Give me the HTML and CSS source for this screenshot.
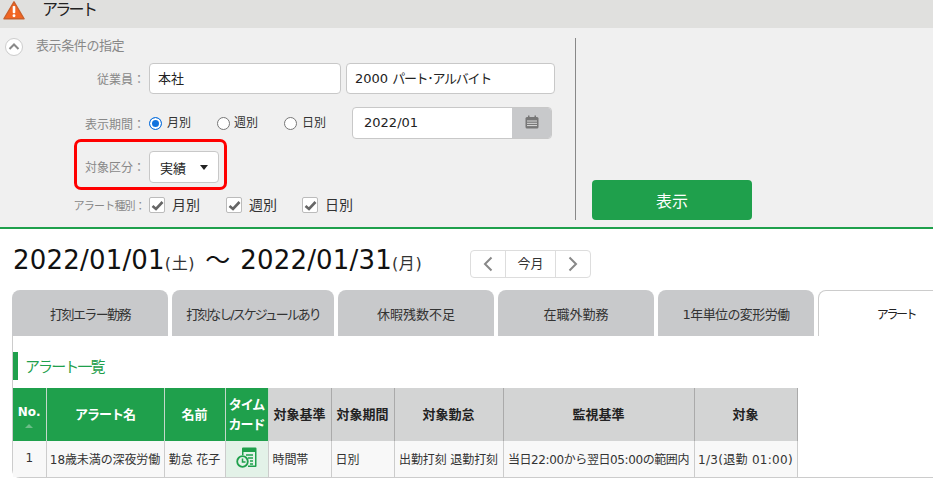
FILE: index.html
```html
<!DOCTYPE html>
<html lang="ja">
<head>
<meta charset="utf-8">
<title>アラート</title>
<link rel="stylesheet" href="styles.css">
</head>
<body>
<header class="topbar">
  <svg class="warn" width="22" height="21" viewBox="0 0 24 22"><path d="M12 1.5 L23 20 H1 Z" fill="#f26522" stroke="#c9602c" stroke-width="1.5" stroke-linejoin="round"/><rect x="10.6" y="6" width="2.8" height="8" rx="1" fill="#fff"/><circle cx="12" cy="16.8" r="1.6" fill="#fff"/></svg>
  <h1 class="page-title">アラート</h1>
</header>
<section class="filter">
  <div class="filter-left">
    <div class="filter-title">
      <svg width="18" height="18" viewBox="0 0 18 18"><circle cx="9" cy="9" r="8.500" fill="#fff" stroke="#ccc"/><path d="M4.500 11 L9 6.500 L13.500 11" fill="none" stroke="#888" stroke-width="2"/></svg>
      <span>表示条件の指定</span>
    </div>
    <div class="row row-emp">
      <label class="lbl">従業員：</label>
      <div class="field f-office">本社</div>
      <div class="field f-type">2000 <span class="narrow">パート･アルバイト</span></div>
    </div>
    <div class="row row-period">
      <label class="lbl">表示期間：</label>
      <span class="radio radio-on"></span><span class="opt opt-r1">月別</span>
      <span class="radio"></span><span class="opt opt-r2">週別</span>
      <span class="radio"></span><span class="opt opt-r3">日別</span>
      <div class="date">
        <span class="date-val">2022/01</span>
        <span class="date-btn"><svg width="14" height="14" viewBox="0 0 14 14"><rect x="0.5" y="2" width="13" height="11.5" rx="1.5" fill="#777"/><rect x="3" y="0.5" width="1.5" height="2.5" fill="#777"/><rect x="9.5" y="0.5" width="1.5" height="2.5" fill="#777"/><path d="M2 6 H12 M2 8.3 H12 M2 10.6 H12" stroke="#ddd"/></svg></span>
      </div>
    </div>
    <div class="row row-kind">
      <label class="lbl lbl-kind">対象区分：</label>
      <div class="select"><span>実績</span><i class="caret"></i></div>
      <div class="highlight"></div>
    </div>
    <div class="row row-alert">
      <label class="lbl lbl-small">アラート種別：</label>
      <span class="check"><svg width="13" height="11" viewBox="0 0 13 11"><path d="M1.5 6 L5 9 L11.5 2" fill="none" stroke="#666" stroke-width="2.6"/></svg></span><span class="opt chk1">月別</span>
      <span class="check"><svg width="13" height="11" viewBox="0 0 13 11"><path d="M1.5 6 L5 9 L11.5 2" fill="none" stroke="#666" stroke-width="2.6"/></svg></span><span class="opt chk2">週別</span>
      <span class="check"><svg width="13" height="11" viewBox="0 0 13 11"><path d="M1.5 6 L5 9 L11.5 2" fill="none" stroke="#666" stroke-width="2.6"/></svg></span><span class="opt chk3">日別</span>
    </div>
  </div>
  <div class="filter-right">
    <button class="show-btn">表示</button>
  </div>
</section>
<main class="content">
  <div class="range">
    <div class="range-text">2022/01/01<small>(土)</small><span class="tilde">～</span>2022/01/31<small>(月)</small></div>
    <div class="nav">
      <span class="nav-btn"><svg width="10" height="16" viewBox="0 0 10 16"><path d="M8.5 1.5 L2 8 L8.5 14.5" fill="none" stroke="#888" stroke-width="2"/></svg></span>
      <span class="nav-now">今月</span>
      <span class="nav-btn"><svg width="10" height="16" viewBox="0 0 10 16"><path d="M1.5 1.5 L8 8 L1.5 14.5" fill="none" stroke="#888" stroke-width="2"/></svg></span>
    </div>
  </div>
  <nav class="tabs">
    <a class="tab t1">打刻エラー勤務</a>
    <a class="tab t2">打刻なし/スケジュールあり</a>
    <a class="tab">休暇残数不足</a>
    <a class="tab">在職外勤務</a>
    <a class="tab t5">1年単位の変形労働</a>
    <a class="tab tab-active">アラート</a>
  </nav>
  <div class="panel">
    <h2 class="sec">アラート一覧</h2>
    <table class="grid">
      <thead>
        <tr>
          <th class="g c-no">No.<i class="sort"></i></th>
          <th class="g c-name">アラート名</th>
          <th class="g c-person">名前</th>
          <th class="g c-card">タイム<br>カード</th>
          <th class="c-basis">対象基準</th>
          <th class="c-span">対象期間</th>
          <th class="c-att">対象勤怠</th>
          <th class="c-mon">監視基準</th>
          <th class="c-tgt">対象</th>
        </tr>
      </thead>
      <tbody>
        <tr>
          <td class="center">1</td>
          <td class="center">18歳未満の深夜労働</td>
          <td class="center">勤怠 花子</td>
          <td class="card-cell"><svg width="21" height="21" viewBox="0 0 21 21"><path d="M6 1.5 Q6 0.5 7 0.5 H19.5 Q20.500 0.5 20.500 1.500 V19 Q20.500 20 19.500 20 H12 V18.500 H19 V5 H7.500 V8 H6 Z" fill="#1fa04c"/><path d="M10 8 H17 M12 11 H17 M14 14 H17 M14 17 H17" stroke="#1fa04c" stroke-width="1.600"/><circle cx="6.500" cy="14.500" r="5.300" fill="none" stroke="#1fa04c" stroke-width="1.800"/><path d="M6.500 11.500 V15 H9.500" fill="none" stroke="#1fa04c" stroke-width="1.500"/></svg></td>
          <td>時間帯</td>
          <td>日別</td>
          <td class="center">出勤打刻 退勤打刻</td>
          <td class="center td-mon">当日22:00から翌日05:00の範囲内</td>
          <td class="center td-tgt">1/3(退勤 01:00)</td>
        </tr>
      </tbody>
    </table>
  </div>
</main>
</body>
</html>
```
FILE: styles.css
```css
* { box-sizing: border-box; }
html, body { margin: 0; height: 484px; overflow: hidden; }
body {
  width: 933px;
  background: #fff;
  color: #222;
  font-family: "DejaVu Sans", "Noto Sans CJK JP", sans-serif;
  font-size: 12px;
}
.topbar {
  height: 28px;
  background: #e0e0de;
  display: flex;
  align-items: center;
  padding-left: 3px;
}
.warn { margin-top: -7px; }
.page-title {
  margin: -8px 0 0 17px;
  font-size: 16px;
  font-weight: 400;
  letter-spacing: -2.700px;
  line-height: 20px;
  color: #222;
}
.filter {
  height: 201px;
  background: #f0f0f0;
  border-bottom: 2px solid #1fa04c;
  display: flex;
  padding-top: 10px;
}
.filter-left {
  width: 576px;
  height: 182px;
  border-right: 1px solid #888;
  display: flex;
  flex-direction: column;
}
.filter-title {
  height: 25px;
  padding-left: 5px;
  display: flex;
  align-items: flex-start;
  gap: 13px;
  color: #888;
  font-size: 13px;
  letter-spacing: -0.4px;
  line-height: 16px;
}
.row { display: flex; align-items: center; position: relative; }
.lbl {
  width: 145px;
  text-align: right;
  color: #888;
  font-size: 12px;
  white-space: nowrap;
  margin-right: 4px;
}
.lbl-kind { margin-top: -2px; }
.lbl-small { font-size: 11px; letter-spacing: -0.8px; }
.row-emp { height: 31px; }
.row-period { height: 32px; margin-top: 13px; }
.row-kind { height: 32px; margin-top: 12px; }
.row-alert { height: 24px; margin-top: 10px; }
.field {
  height: 31px;
  background: #fff;
  border: 1px solid #c8c8c8;
  border-radius: 4px;
  font-size: 13px;
  line-height: 29px;
  padding-left: 8px;
  color: #222;
  white-space: nowrap;
}
.f-office { width: 192px; }
.f-type { width: 209px; margin-left: 5px; }
.narrow { letter-spacing: -1.300px; }
.radio {
  width: 13px;
  height: 13px;
  border-radius: 50%;
  border: 1px solid #777;
  background: #fff;
  flex: none;
}
.radio-on {
  border: 1px solid #1273de;
  background: #1273de;
  box-shadow: inset 0 0 0 2px #fff;
}
.opt { font-size: 12px; color: #333; line-height: 16px; }
.opt-r1 { margin: 0 26px 0 5px; }
.opt-r2 { margin: 0 26px 0 4px; }
.opt-r3 { margin: 0 26px 0 5px; }
.date {
  width: 200px;
  height: 32px;
  display: flex;
  background: #fff;
  border: 1px solid #c8c8c8;
  border-radius: 4px;
  overflow: hidden;
}
.date-val { flex: 1; padding-left: 11px; font-size: 13px; line-height: 30px; color: #222; }
.date-btn {
  width: 39px;
  background: #c8c9cb;
  display: flex;
  align-items: flex-start;
  justify-content: center;
  padding-top: 7px;
}
.select {
  width: 70px;
  height: 32px;
  background: #fff;
  border: 1px solid #c8c8c8;
  border-radius: 4px;
  display: flex;
  align-items: center;
  justify-content: space-between;
  padding: 0 10px;
  font-size: 13px;
  color: #222;
}
.caret {
  width: 0;
  height: 0;
  border-left: 4px solid transparent;
  border-right: 4px solid transparent;
  border-top: 5px solid #222;
}
.highlight {
  position: absolute;
  left: 74px;
  top: -12px;
  width: 153px;
  height: 51px;
  border: 3px solid #f00;
  border-radius: 7px;
}
.check {
  width: 16px;
  height: 16px;
  background: #fff;
  border: 1px solid #bbb;
  border-radius: 2px;
  display: flex;
  align-items: center;
  justify-content: center;
  flex: none;
}
.row-alert .opt { font-size: 14px; }
.chk1 { margin: 0 26px 0 7px; }
.chk2 { margin: 0 25px 0 7px; }
.chk3 { margin: 0 0 0 7px; }
.filter-right {
  flex: 1;
  display: flex;
  align-items: flex-end;
  height: 182px;
  padding-left: 16px;
}
.show-btn {
  width: 160px;
  height: 40px;
  border: 0;
  border-radius: 4px;
  background: #1fa04c;
  color: #fff;
  font-family: inherit;
  font-size: 16px;
  padding: 0;
}
.content { padding-left: 12px; }
.range {
  height: 61px;
  display: flex;
  align-items: flex-start;
  padding-top: 21px;
}
.range-text {
  width: 458px;
  font-size: 26px;
  line-height: 22px;
  padding-left: 1px;
  color: #111;
  white-space: nowrap;
  letter-spacing: 0.2px;
  margin-top: -1px;
}
.range-text small { font-size: 16px; color: #333; letter-spacing: 0.6px; }
.tilde { font-size: 25px; margin: 0 10px; letter-spacing: 0; }
.nav {
  width: 121px;
  height: 28px;
  display: flex;
  background: #fff;
  border: 1px solid #ddd;
  border-radius: 4px;
}
.nav-btn { width: 34px; display: flex; align-items: center; justify-content: center; }
.nav-now {
  width: 52px;
  text-align: center;
  border-left: 1px solid #ddd;
  border-right: 1px solid #ddd;
  font-size: 13px;
  line-height: 26px;
  color: #333;
}
.tabs { display: flex; gap: 4px; height: 46px; }
.tab {
  flex: none;
  width: 156px;
  background: #c8c9cb;
  border-radius: 8px 8px 0 0;
  display: flex;
  align-items: center;
  justify-content: center;
  font-size: 13px;
  color: #333;
  white-space: nowrap;
}
.t1 { letter-spacing: -1.600px; }
.t2 { width: 162px; letter-spacing: -2px; }
.t5 { letter-spacing: -0.600px; }
.tab-active {
  background: #fff;
  border: 1px solid #ccc;
  border-bottom: 0;
  font-size: 12px;
  color: #222;
  letter-spacing: -2.400px;
}
.panel {
  height: 142px;
  width: 960px;
  border-left: 1px solid #ccc;
  border-bottom: 1px solid #ccc;
  border-radius: 0 0 0 8px;
  padding-top: 16px;
}
.sec {
  margin: 0 0 8px;
  height: 28px;
  border-left: 5px solid #1fa04c;
  padding-left: 7px;
  font-size: 15px;
  font-weight: 400;
  line-height: 30px;
  letter-spacing: -1.900px;
  color: #1fa04c;
}
.grid {
  table-layout: fixed;
  width: 784px;
  border-collapse: collapse;
  font-size: 12px;
}
.grid th {
  height: 53px;
  background: #d3d4d4;
  font-size: 13px;
  font-weight: 700;
  line-height: 20px;
  padding: 0;
  color: #222;
  border-right: 1px solid #aaa;
  white-space: nowrap;
}
.grid th.g {
  background: #1fa04c;
  color: #fff;
  border-right: 1px solid #c4d8cb;
}
.c-no { width: 33px; }
.c-name { width: 118px; }
.c-person { width: 61px; }
.c-card { width: 43px; }
.c-basis { width: 63px; }
.c-span { width: 63px; }
.c-att { width: 109px; }
.c-mon { width: 191px; }
.c-tgt { width: 103px; }
.sort {
  display: block;
  width: 0;
  height: 0;
  margin: 2px auto 0;
  border-left: 4px solid transparent;
  border-right: 4px solid transparent;
  border-bottom: 4px solid #6cbd88;
}
.grid th.c-no { font-size: 12px; }
.grid th.c-name { letter-spacing: -1px; }
.grid th.c-card { letter-spacing: -1px; }
.grid td {
  height: 36px;
  background: #f8f8f8;
  border-right: 1px solid #ccc;
  padding: 0 0 2px 4px;
  font-size: 12px;
  letter-spacing: -0.1px;
  color: #333;
  white-space: nowrap;
  overflow: hidden;
}
.grid td.center { text-align: center; padding: 0 0 2px; }
.grid td.td-mon { letter-spacing: -0.4px; }
.grid td.td-tgt { letter-spacing: 0.3px; }
.grid td.card-cell { background: #e3f2e8; text-align: center; padding: 0 0 4px; }
.grid td svg { vertical-align: middle; }
```
